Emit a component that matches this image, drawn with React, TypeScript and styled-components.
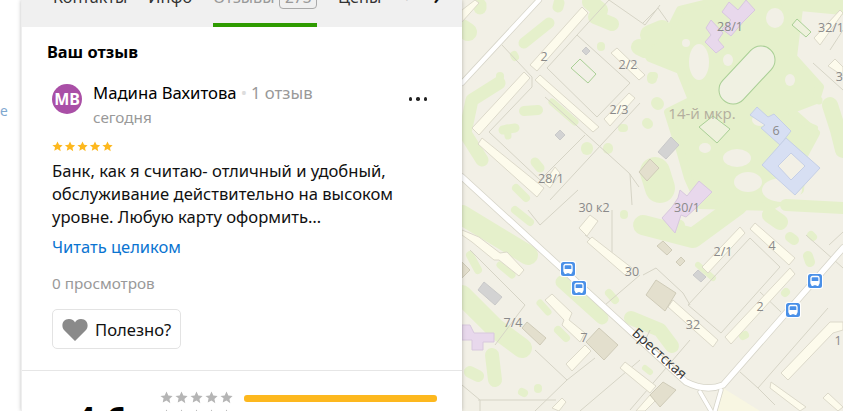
import React from "react";
import styled, { createGlobalStyle } from "styled-components";

const GlobalStyle = createGlobalStyle`
  html, body { margin: 0; padding: 0; height: 100%; overflow: hidden; background: #fff; }
  #root { height: 100%; }
`;

const Page = styled.div`
  display: flex;
  width: 843px;
  height: 411px;
  overflow: hidden;
  font-family: "Noto Sans", Arial, sans-serif;
  color: #000;
`;
const Gutter = styled.div`
  flex: 0 0 21px;
  display: flex;
  justify-content: flex-end;
  padding-top: 101px;
  height: 310px;
  overflow: hidden;
`;
const GutterText = styled.span`
  width: 21px;
  margin-left: -19px;
  font-size: 14px;
  color: #7fa8cf;
`;
const Panel = styled.div`
  position: relative;
  z-index: 2;
  flex: 0 0 440px;
  border-left: 1px solid #eeeeee;
  box-shadow: 0 0 4px rgba(0, 0, 0, 0.25);
  background: #fff;
  overflow: hidden;
`;
const Tabs = styled.div`
  height: 27px;
  background: #f0f0f0;
  display: flex;
  align-items: flex-end;
  overflow: hidden;
  padding-left: 31px;
`;
const Tab = styled.div<{ $active?: boolean; $faint?: boolean }>`
  height: 41px;
  flex: none;
  margin-right: 21px;
  font-size: 16.2px;
  line-height: 23px;
  color: ${(p) => (p.$faint ? "#d0d0d0" : p.$active ? "#999" : "#333")};
  border-bottom: ${(p) => (p.$active ? "4px solid #2e9b00" : "4px solid transparent")};
  display: flex;
  gap: 5px;
  box-sizing: border-box;
`;
const Badge = styled.span`
  border: 1px solid #aaa;
  border-radius: 4px;
  padding: 0 4.5px;
  height: 21px;
  line-height: 20px;
  font-size: 15.5px;
`;
const Chevron = styled.div`
  flex: none;
  height: 41px;
  margin-left: 1px;
  font-size: 17px;
  font-weight: 700;
  line-height: 23px;
  color: #111;
`;
const Title = styled.h2`
  margin: 0;
  padding: 14px 0 0 25px;
  font-size: 16.4px;
  line-height: 22px;
  font-weight: 700;
`;
const Review = styled.div`
  padding: 19px 0 0 30px;
  height: 308px;
  box-sizing: border-box;
  border-bottom: 1px solid #e6e6e6;
`;
const Head = styled.div`
  display: flex;
  align-items: flex-start;
`;
const Avatar = styled.div`
  width: 30px;
  height: 30px;
  border-radius: 50%;
  background: #a94fa6;
  color: #fff;
  font-size: 16px;
  font-weight: 700;
  line-height: 30px;
  text-align: center;
  overflow: hidden;
  margin-top: 2px;
  flex: none;
`;
const Who = styled.div`
  margin-left: 11px;
  flex: 1;
`;
const NameRow = styled.div`
  font-size: 16.7px;
  line-height: 22px;
`;
const Dot = styled.span`
  color: #ddd;
  margin: 0 4px;
`;
const Muted = styled.span`
  color: #999;
`;
const When = styled.div`
  margin-top: 3px;
  font-size: 15.3px;
  line-height: 20px;
  color: #999;
`;
const More = styled.div`
  display: flex;
  gap: 4px;
  margin: 15px 35px 0 0;
`;
const MoreDot = styled.i`
  width: 3.5px;
  height: 3.5px;
  border-radius: 50%;
  background: #222;
`;
const RatingRow = styled.div`
  margin-top: 14px;
`;
const Body = styled.p`
  margin: 7px 0 0;
  font-size: 16.6px;
  line-height: 23px;
  color: #111;
`;
const ReadMore = styled.a`
  display: block;
  margin-top: 8px;
  font-size: 16.5px;
  line-height: 22px;
  color: #0a74d1;
`;
const Views = styled.div`
  margin-top: 15px;
  font-size: 15.3px;
  line-height: 20px;
  color: #999;
`;
const Useful = styled.button`
  margin-top: 16px;
  width: 129px;
  height: 40px;
  display: flex;
  align-items: center;
  gap: 7px;
  padding: 0 0 0 9px;
  background: #fff;
  border: 1px solid #e3e3e3;
  border-radius: 5px;
  font: inherit;
  font-size: 16.6px;
  color: #111;
`;
const Summary = styled.div`
  position: relative;
  display: flex;
  padding: 20px 0 0 53px;
`;
const Score = styled.div`
  width: 85px;
  font-size: 36px;
  line-height: 40px;
  font-weight: 700;
  padding-top: 9px;
`;
const StarColumn = styled.div`
  width: 84px;
  flex: none;
  display: flex;
  flex-direction: column;
  gap: 5px;
`;
const Bar = styled.div`
  width: 193px;
  height: 7px;
  margin-top: 4px;
  border-radius: 3px;
  background: #fdb81e;
`;
const MapArea = styled.div`
  flex: 1;
  height: 411px;
  background: #f2f0e6;
`;
const MapSvg = styled.svg`
  display: block;
  text {
    font-family: "Open Sans", "Noto Sans", sans-serif;
  }
`;

const STAR = "M6 0.5l1.7 3.6 3.9.5-2.9 2.7.8 3.9L6 8.8 2.5 10.7l.8-3.9L.4 4.6l3.9-.5z";

const Stars = ({ color, size, gap, count = 5 }: { color: string; size: number; gap: number; count?: number }) => (
  <svg width={count * size + (count - 1) * gap} height={size} style={{ display: "block", flex: "none" }}>
    {Array.from({ length: count }).map((_, i) => (
      <g key={i} transform={`translate(${i * (size + gap)} 0) scale(${size / 12})`}>
        <path d={STAR} fill={color} />
      </g>
    ))}
  </svg>
);

const BG = "#f2f0e6";
const GREEN = "#e5f0cb";
// large mottled park in the upper right of the map, then clearings on top of it
const PARK =
  "M643 47L668 34L680 10L720 0L800 0L793 57L820 87L816 100L790 110L816 133L803 157L800 190L770 207L700 205L688 178L680 150L668 112L692 100L680 70L650 58Z";
const clearings: [number, number, number, number][] = [
  [699, 62, 10, 18],
  [686, 43, 4, 4],
  [728, 60, 5, 6],
  [775, 18, 9, 10],
  [705, 148, 6, 5],
  [737, 158, 14, 9],
  [748, 182, 14, 10],
  [782, 190, 20, 12],
  [760, 120, 8, 6],
  [790, 80, 5, 6],
];
const blobs: [string, number][] = [
  ["M524 43L549 23", 11],
  ["M480 5L480 8", 13],
  ["M462 28L468 32", 18],
  ["M559 3L558 7", 11],
  ["M590 2L600 10", 16],
  ["M595 17L612 24", 14],
  ["M639 47L645 50", 16],
  ["M650 35L662 30", 20],
  ["M601 46L601 47", 8],
  ["M514 55L515 57", 8],
  ["M500 76L500 77", 8],
  ["M499 83L472 100L465 133L482 160", 13],
  ["M524 111L538 110", 10],
  ["M503 130L515 128", 9],
  ["M507 128L508 136", 7],
  ["M587 148L587 149", 12],
  ["M608 148L608 149", 10],
  ["M647 123L648 124", 10],
  ["M622 128L624 128", 8],
  ["M657 103L658 104", 12],
  ["M652 77L652 79", 10],
  ["M655 172L660 188", 30],
  ["M535 162L540 168", 9],
  ["M516 188L526 198", 8],
  ["M552 102L575 122", 7],
  ["M652 76L654 76", 8],
  ["M819 100L819 101", 7],
  ["M790 0L843 5", 20],
  ["M830 105L838 130L843 150", 16],
  ["M808 125L815 128", 6],
  ["M462 215L528 255", 20],
  ["M515 210L530 222", 8],
  ["M470 255L478 270", 8],
  ["M562 282L602 318", 13],
  ["M609 293L615 300", 8],
  ["M540 303L548 312", 7],
  ["M500 265L512 275", 7],
  ["M462 295L495 328L522 348", 20],
  ["M492 355L495 380", 14],
  ["M470 372L478 376", 12],
  ["M522 392L524 393", 8],
  ["M538 388L538 389", 8],
  ["M558 330L566 338", 8],
  ["M631 318L660 330L672 346", 14],
  ["M645 368L650 372", 6],
  ["M624 214L624 215", 8],
  ["M643 225L693 238L738 205", 20],
  ["M770 215L780 222", 16],
  ["M790 237L794 240", 10],
  ["M808 256L810 262", 10],
  ["M811 235L813 237", 8],
  ["M743 336L745 335", 8],
  ["M785 293L786 292", 8],
  ["M698 265L713 278", 6],
  ["M786 205L843 208", 12],
  ["M670 220L680 225", 10],
];
const lines: string[] = [
  "M502 45L532 77L532 87L489 132L540 180L585 135",
  "M547 68L577 35L630 83L597 117Z",
  "M577 35L609 0",
  "M545 97L629 173L639 187",
  "M640 103L550 200",
  "M630 174L632 205",
  "M609 0L645 25L660 5",
  "M643 23L658 8L668 22",
  "M813 63L843 90",
  "M830 50L843 30",
  "M750 238L780 267L721 333L688 305Z",
  "M643 275L656 268L683 293L690 305",
  "M828 308L758 388",
  "M740 372L758 388L775 405",
  "M806 235L843 268",
  "M760 292L781 312",
  "M829 245L843 232",
  "M528 210L540 225L578 190",
  "M585 235L612 255L612 210",
  "M643 345L650 330",
  "M470 250L480 260L525 305L495 345",
  "M535 350L567 380L595 358",
  "M567 380L535 411",
  "M478 400L556 400",
  "M580 411L640 360",
  "M462 385L480 400L480 411",
  "M630 410L690 340",
  "M605 305L640 275",
];
type Shape = { p: string; f: string; s: string };
const CREAM = "#fdfbec";
const CS = "#dcd9ca";
const TAUPE = "#e3dfcd";
const TS = "#cfcbb8";
const GREY = "#d3d3d3";
const GS = "#c9c9c9";
const PURPLE = "#e8d8ec";
const PS = "#d8c8de";
const shapes: Shape[] = [
  { p: "582,7 588,13 537,71 530,65", f: CREAM, s: CS },
  { p: "540,75 599,127 593,132 535,80", f: CREAM, s: CS },
  { p: "617,48 645,75 639,80 611,53", f: CREAM, s: CS },
  { p: "629,93 635,98 610,126 604,119", f: CREAM, s: CS },
  { p: "524,72 530,78 479,135 472,128", f: CREAM, s: CS },
  { p: "482,138 544,188 537,197 478,144", f: CREAM, s: CS },
  { p: "555,167 560,173 550,188 544,183", f: CREAM, s: CS },
  { p: "462,10 475,0 479,3 462,22", f: CREAM, s: CS },
  { p: "586,47 590,51 586,55 582,51", f: GREY, s: GS },
  { p: "560,130 565,135 560,140 555,135", f: GREY, s: GS },
  { p: "650,159 659,168 647,181 639,172", f: TAUPE, s: TS },
  { p: "729,2 738,10 746,0 755,10 743,22 731,36 722,29 731,20 722,12", f: PURPLE, s: PS },
  { p: "711,20 723,33 718,40 724,47 716,53 705,42 711,35 706,28", f: PURPLE, s: PS },
  { p: "680,190 687,196 699,181 712,192 696,208 686,217 681,215 675,233 662,218 672,207 678,198", f: PURPLE, s: PS },
  { p: "840,10 843,13 820,45 814,38", f: CREAM, s: CS },
  { p: "835,59 843,67 843,76 828,66", f: CREAM, s: CS },
  { p: "671,137 679,145 666,159 658,152", f: GREY, s: GS },
  { p: "757,107 768,117 774,114 791,131 780,145 761,128 765,125 750,115", f: "#d7dff3", s: "#c5cfe6" },
  { p: "786,138 820,168 795,195 762,165", f: "#d7dff3", s: "#c5cfe6" },
  { p: "791,153 805,166 791,180 778,166", f: BG, s: "#c5cfe6" },
  { p: "590,215 598,221 587,236 579,228", f: CREAM, s: CS },
  { p: "592,237 632,268 625,275 587,242", f: CREAM, s: CS },
  { p: "462,230 479,237 500,253 507,252 524,270 519,276 499,260 494,260 472,242 462,235", f: CREAM, s: CS },
  { p: "545,300 552,294 572,313 569,320 585,333 580,342 562,325 564,320", f: CREAM, s: CS },
  { p: "585,345 591,351 572,371 566,364", f: CREAM, s: CS },
  { p: "599,328 618,345 604,360 586,342", f: TAUPE, s: TS },
  { p: "527,322 546,338 540,345 522,328", f: TAUPE, s: TS },
  { p: "484,282 502,297 495,305 478,290", f: GREY, s: GS },
  { p: "462,325 470,325 474,333 494,333 494,342 483,342 483,350 472,350 472,340 462,340", f: PURPLE, s: PS },
  { p: "625,362 656,386 650,393 620,368", f: CREAM, s: CS },
  { p: "636,411 650,395 656,400 645,411", f: CREAM, s: CS },
  { p: "663,382 676,390 660,407 650,395", f: TAUPE, s: TS },
  { p: "552,408 562,398 566,402 559,411", f: CREAM, s: CS },
  { p: "462,262 470,270 462,278", f: TAUPE, s: TS },
  { p: "740,227 745,233 708,273 702,267", f: CREAM, s: CS },
  { p: "755,223 795,258 789,265 750,229", f: CREAM, s: CS },
  { p: "790,268 795,274 731,344 725,337", f: CREAM, s: CS },
  { p: "673,300 718,340 713,347 668,307", f: CREAM, s: CS },
  { p: "656,280 676,293 665,311 646,295", f: TAUPE, s: TS },
  { p: "698,270 706,277 701,282 693,275", f: GREY, s: GS },
  { p: "663,241 672,250 667,255 657,246", f: TAUPE, s: TS },
  { p: "681,257 685,261 680,266 676,262", f: TAUPE, s: TS },
  { p: "781,373 830,322 843,322 843,330 833,333 788,380", f: CREAM, s: CS },
  { p: "771,382 806,407 800,411 770,388", f: CREAM, s: CS },
  { p: "828,393 843,407 838,411 823,398", f: CREAM, s: CS },
];
const labels: [string, number, number][] = [
  ["2", 544, 61],
  ["2/2", 628, 69],
  ["2/3", 619, 114],
  ["28/1", 551, 183],
  ["28/1", 730, 31],
  ["32/1", 831, 32],
  ["32", 843, 81],
  ["6", 776, 135],
  ["30 к2", 594, 212],
  ["30/1", 687, 212],
  ["2/1", 723, 256],
  ["4", 772, 250],
  ["2", 760, 311],
  ["32", 693, 329],
  ["30", 632, 276],
  ["7/4", 513, 327],
  ["7", 584, 342],
  ["1", 838, 345],
];
const stops: [number, number][] = [
  [568, 269],
  [579, 288],
  [815, 281],
  [793, 310],
];
const ROAD_PATH = "M462 177L686 382Q706 392 723 385L843 248";

const BusStop = ({ x, y }: { x: number; y: number }) => (
  <g transform={`translate(${x - 8} ${y - 8})`}>
    <rect width="16" height="16" rx="3" fill="#fff" />
    <rect x="1" y="1" width="14" height="14" rx="2.5" fill="#4a90e8" />
    <rect x="4" y="3.5" width="8" height="8" rx="1.5" fill="none" stroke="#fff" strokeWidth="1.3" />
    <rect x="4" y="8" width="8" height="3.5" fill="#fff" />
    <rect x="4.5" y="11.5" width="2" height="1.5" fill="#fff" />
    <rect x="9.5" y="11.5" width="2" height="1.5" fill="#fff" />
  </g>
);

const CityMap = () => (
  <MapSvg width="381" height="411" viewBox="462 0 381 411">
    <path d="M723 388L760 411L716 411Z" fill="#f8f6e2" />
    <path d={PARK} fill={GREEN} stroke={GREEN} strokeWidth="8" strokeLinejoin="round" />
    {clearings.map(([cx, cy, rx, ry]) => (
      <ellipse key={`${cx}-${cy}`} cx={cx} cy={cy} rx={rx} ry={ry} fill={BG} />
    ))}
    {blobs.map(([d, w], i) => (
      <path key={i} d={d} fill="none" stroke={GREEN} strokeWidth={w} strokeLinecap="round" strokeLinejoin="round" />
    ))}
    {lines.map((d) => (
      <path key={d} d={d} fill="none" stroke="#d6d4c6" strokeWidth="1" />
    ))}
    <g fill="none" stroke="#d6d4c8" strokeLinecap="round">
      <path d="M462 83L539 0" strokeWidth="6" />
      <path d={ROAD_PATH} strokeWidth="7" />
      <path d="M700 392L711 411M721 390L715 411" strokeWidth="5" />
    </g>
    <g fill="none" stroke="#fff" strokeLinecap="round">
      <path d="M462 83L539 0" strokeWidth="4.5" />
      <path d={ROAD_PATH} strokeWidth="5.5" />
      <path d="M700 392L711 411M721 390L715 411" strokeWidth="3.5" />
    </g>
    {shapes.map((s) => (
      <polygon key={s.p} points={s.p} fill={s.f} stroke={s.s} strokeWidth="1" strokeLinejoin="round" />
    ))}
    <polygon points="580,59 596,74 588,83 571,68" fill={BG} stroke="#a9cf95" strokeWidth="1" strokeLinejoin="round" />
    <polygon points="713,116 730,129 717,143 699,127" fill="#eef1dc" stroke="#a9cf95" strokeWidth="1" />
    <polygon points="797,19 811,32 806,37 792,25" fill="#eef1dc" stroke="#a9cf95" strokeWidth="1" />
    <path d="M761 60L733 90" stroke="#a9cf95" strokeWidth="29" strokeLinecap="round" />
    <path d="M761 60L733 90" stroke="#f0f1e2" strokeWidth="27" strokeLinecap="round" />
    {labels.map(([t, x, y]) => (
      <text key={`${t}${x}`} x={x} y={y} textAnchor="middle" fontSize="12.5" fill="#8a8a8a">
        {t}
      </text>
    ))}
    <text x="702" y="119" textAnchor="middle" fontSize="15" fill="#b3ae9e">14-й мкр.</text>
    <text x="659" y="358" textAnchor="middle" fontSize="14" fill="#333" transform="rotate(42 659 354)">Брестская</text>
    {stops.map(([x, y]) => (
      <BusStop key={x} x={x} y={y} />
    ))}
  </MapSvg>
);

const Heart = () => (
  <svg width="26" height="23" viewBox="0 0 26 23">
    <path d="M13 23L2 12C-1 8.500 0 1 7 1c3 0 5 1.500 6 3.500C14 2.500 16 1 19 1c7 0 8 7.500 5 11z" fill="#8a8a8a" />
  </svg>
);

const App = () => (
  <Page>
    <GlobalStyle />
    <Gutter>
      <GutterText>е</GutterText>
    </Gutter>
    <Panel>
      <Tabs>
        <Tab>Контакты</Tab>
        <Tab>Инфо</Tab>
        <Tab $active>
          Отзывы <Badge>273</Badge>
        </Tab>
        <Tab>Цены</Tab>
        <Tab $faint>+</Tab>
        <Chevron>›</Chevron>
      </Tabs>
      <Title>Ваш отзыв</Title>
      <Review>
        <Head>
          <Avatar>МВ</Avatar>
          <Who>
            <NameRow>
              Мадина Вахитова<Dot>•</Dot>
              <Muted>1 отзыв</Muted>
            </NameRow>
            <When>сегодня</When>
          </Who>
          <More>
            <MoreDot />
            <MoreDot />
            <MoreDot />
          </More>
        </Head>
        <RatingRow>
          <Stars color="#fdb81e" size={11} gap={1.5} />
        </RatingRow>
        <Body>
          Банк, как я считаю- отличный и удобный,
          <br />
          обслуживание действительно на высоком
          <br />
          уровне. Любую карту оформить…
        </Body>
        <ReadMore>Читать целиком</ReadMore>
        <Views>0 просмотров</Views>
        <Useful>
          <Heart />
          Полезно?
        </Useful>
      </Review>
      <Summary>
        <Score>4,6</Score>
        <StarColumn>
          <Stars color="#b5b5b5" size={13} gap={2} />
          <Stars color="#b5b5b5" size={13} gap={2} />
        </StarColumn>
        <Bar />
      </Summary>
    </Panel>
    <MapArea>
      <CityMap />
    </MapArea>
  </Page>
);

export default App;
